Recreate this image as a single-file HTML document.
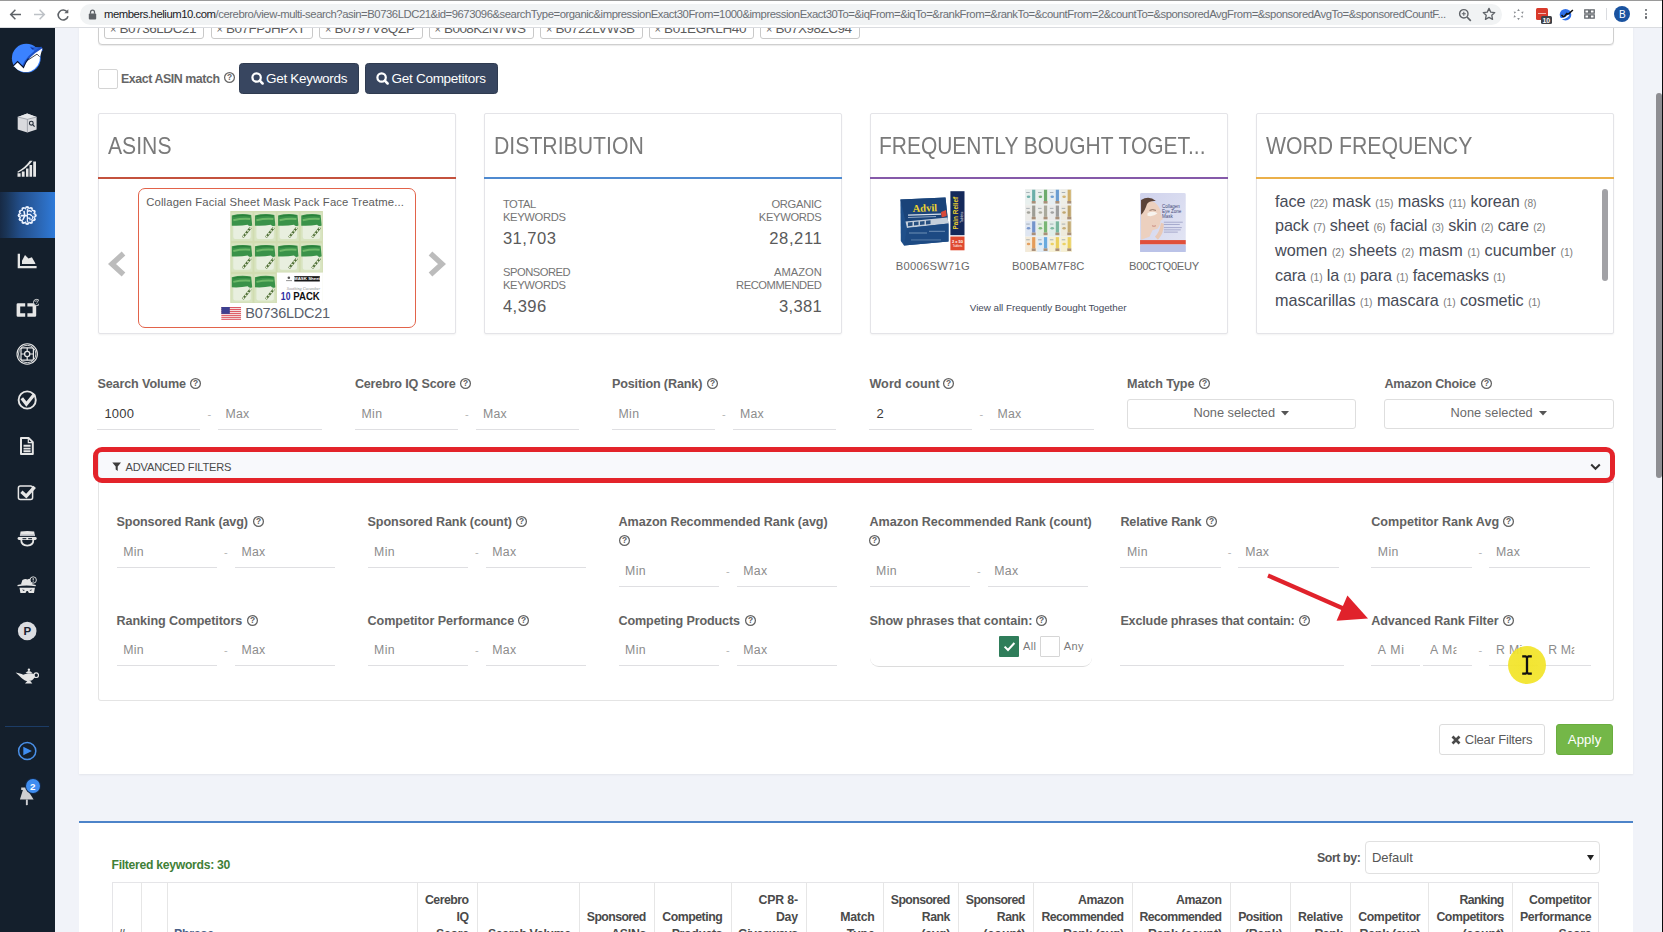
<!DOCTYPE html>
<html lang="en"><head><meta charset="utf-8"><title>Cerebro - Helium 10</title>
<style>
html,body{margin:0;padding:0;}
body{width:1663px;height:932px;overflow:hidden;position:relative;background:#f1f3f9;
font-family:"Liberation Sans",sans-serif;}
#root{position:absolute;left:0;top:0;width:1663px;height:932px;overflow:hidden;}
#root div,#root span.t,#root svg{position:absolute;box-sizing:border-box;}
span.t{white-space:nowrap;display:block;}
</style></head><body><div id="root">
<div style="left:79px;top:20px;width:1553.5px;height:754px;background:#fff;box-shadow:0 1px 2px rgba(0,0,0,.06);"></div>
<div style="left:79px;top:821px;width:1553.5px;height:120px;background:#fff;border-top:2px solid #4d84c9;"></div>
<div style="left:97.5px;top:10px;width:1516.5px;height:34.5px;border:1px solid #cfcfcf;border-radius:4px;background:#fff;box-shadow:0 1px 1px rgba(0,0,0,.08);"></div>
<div style="left:104px;top:14px;width:100px;height:24.5px;border:1px solid #c9c9c9;border-radius:3px;background:#fff;"></div>
<span class="t" style="top:24.09px;font-size:11px;line-height:11px;color:#666;left:110px;">×</span>
<span class="t" style="top:22.27px;font-size:13.5px;line-height:13.5px;color:#5c5c5c;letter-spacing:-0.451px;left:119.5px;">B0736LDC21</span>
<div style="left:210.5px;top:14px;width:102.5px;height:24.5px;border:1px solid #c9c9c9;border-radius:3px;background:#fff;"></div>
<span class="t" style="top:24.09px;font-size:11px;line-height:11px;color:#666;left:216.5px;">×</span>
<span class="t" style="top:22.27px;font-size:13.5px;line-height:13.5px;color:#5c5c5c;letter-spacing:-0.503px;left:226px;">B07FPJHPXT</span>
<div style="left:319px;top:14px;width:103.5px;height:24.5px;border:1px solid #c9c9c9;border-radius:3px;background:#fff;"></div>
<span class="t" style="top:24.09px;font-size:11px;line-height:11px;color:#666;left:325px;">×</span>
<span class="t" style="top:22.27px;font-size:13.5px;line-height:13.5px;color:#5c5c5c;letter-spacing:-0.312px;left:334.5px;">B0797V8QZP</span>
<div style="left:428.5px;top:14px;width:105px;height:24.5px;border:1px solid #c9c9c9;border-radius:3px;background:#fff;"></div>
<span class="t" style="top:24.09px;font-size:11px;line-height:11px;color:#666;left:434.5px;">×</span>
<span class="t" style="top:22.27px;font-size:13.5px;line-height:13.5px;color:#5c5c5c;letter-spacing:-0.561px;left:444px;">B008K2N7WS</span>
<div style="left:540px;top:14px;width:102.5px;height:24.5px;border:1px solid #c9c9c9;border-radius:3px;background:#fff;"></div>
<span class="t" style="top:24.09px;font-size:11px;line-height:11px;color:#666;left:546px;">×</span>
<span class="t" style="top:22.27px;font-size:13.5px;line-height:13.5px;color:#5c5c5c;letter-spacing:-0.479px;left:555.5px;">B0722LVW3B</span>
<div style="left:648.5px;top:14px;width:105.5px;height:24.5px;border:1px solid #c9c9c9;border-radius:3px;background:#fff;"></div>
<span class="t" style="top:24.09px;font-size:11px;line-height:11px;color:#666;left:654.5px;">×</span>
<span class="t" style="top:22.27px;font-size:13.5px;line-height:13.5px;color:#5c5c5c;letter-spacing:-0.340px;left:664px;">B01EGRLH40</span>
<div style="left:760px;top:14px;width:99.5px;height:24.5px;border:1px solid #c9c9c9;border-radius:3px;background:#fff;"></div>
<span class="t" style="top:24.09px;font-size:11px;line-height:11px;color:#666;left:766px;">×</span>
<span class="t" style="top:22.27px;font-size:13.5px;line-height:13.5px;color:#5c5c5c;letter-spacing:-0.507px;left:775.5px;">B07X98ZC94</span>
<div style="left:97.5px;top:69px;width:20px;height:20px;border:1px solid #d4d4d4;border-radius:2px;background:#fff;"></div>
<span class="t" style="top:73.00px;font-size:12.4px;line-height:12.4px;color:#666;font-weight:700;letter-spacing:-0.440px;left:121px;">Exact ASIN match</span>
<svg style="left:222.7px;top:71.1px" width="13" height="13" viewBox="0 0 13 13"><circle cx="6.5" cy="6.5" r="4.9" fill="none" stroke="#666" stroke-width="1.25"/><text x="6.5" y="9.4" font-size="8.4" font-weight="700" text-anchor="middle" fill="#666" font-family="Liberation Sans, sans-serif">?</text></svg>
<div style="left:238.5px;top:63px;width:120.5px;height:31px;background:#384660;border-radius:3.5px;border:1px solid #2f3b50;"></div>
<svg style="left:250.5px;top:72px" width="13" height="13" viewBox="0 0 13 13"><circle cx="5.6" cy="5.5" r="4.2" fill="none" stroke="#fff" stroke-width="2.2"/><path d="M8.8 8.7 L11.6 11.5" stroke="#fff" stroke-width="2.5" stroke-linecap="round"/></svg>
<span class="t" style="top:72.17px;font-size:13.5px;line-height:13.5px;color:#fff;letter-spacing:-0.300px;left:266px;">Get Keywords</span>
<div style="left:364.5px;top:63px;width:133.5px;height:31px;background:#384660;border-radius:3.5px;border:1px solid #2f3b50;"></div>
<svg style="left:376px;top:72px" width="13" height="13" viewBox="0 0 13 13"><circle cx="5.6" cy="5.5" r="4.2" fill="none" stroke="#fff" stroke-width="2.2"/><path d="M8.8 8.7 L11.6 11.5" stroke="#fff" stroke-width="2.5" stroke-linecap="round"/></svg>
<span class="t" style="top:72.17px;font-size:13.5px;line-height:13.5px;color:#fff;letter-spacing:-0.271px;left:391.5px;">Get Competitors</span>
<div style="left:97.5px;top:113px;width:358px;height:220.5px;background:#fff;border:1px solid #e4e4e8;border-radius:2px;box-shadow:0 1px 2px rgba(0,0,0,.05);"></div>
<div style="left:97.5px;top:177.1px;width:358px;height:2.2px;background:#c4523e;"></div>
<span class="t" style="top:134.56px;font-size:23.2px;line-height:23.2px;color:#7a7a7a;left:108px;transform:scaleX(0.9124);transform-origin:0 0;">ASINS</span>
<div style="left:484px;top:113px;width:358px;height:220.5px;background:#fff;border:1px solid #e4e4e8;border-radius:2px;box-shadow:0 1px 2px rgba(0,0,0,.05);"></div>
<div style="left:484px;top:177.1px;width:358px;height:2.2px;background:#4f8ad0;"></div>
<span class="t" style="top:134.56px;font-size:23.2px;line-height:23.2px;color:#7a7a7a;left:493.7px;transform:scaleX(0.9156);transform-origin:0 0;">DISTRIBUTION</span>
<div style="left:870px;top:113px;width:358px;height:220.5px;background:#fff;border:1px solid #e4e4e8;border-radius:2px;box-shadow:0 1px 2px rgba(0,0,0,.05);"></div>
<div style="left:870px;top:177.1px;width:358px;height:2.2px;background:#8559a9;"></div>
<span class="t" style="top:134.56px;font-size:23.2px;line-height:23.2px;color:#7a7a7a;left:879.4px;transform:scaleX(0.9039);transform-origin:0 0;">FREQUENTLY BOUGHT TOGET...</span>
<div style="left:1256.3px;top:113px;width:358px;height:220.5px;background:#fff;border:1px solid #e4e4e8;border-radius:2px;box-shadow:0 1px 2px rgba(0,0,0,.05);"></div>
<div style="left:1256.3px;top:177.1px;width:358px;height:2.2px;background:#ebb04a;"></div>
<span class="t" style="top:134.56px;font-size:23.2px;line-height:23.2px;color:#7a7a7a;left:1266.3px;transform:scaleX(0.9151);transform-origin:0 0;">WORD FREQUENCY</span>
<div style="left:137.6px;top:188.4px;width:278.2px;height:139.8px;border:1.8px solid #e2634a;border-radius:7px;background:#fff;"></div>
<span class="t" style="top:196.63px;font-size:11.3px;line-height:11.3px;color:#5c5c5c;letter-spacing:0.144px;left:146.2px;">Collagen Facial Sheet Mask Pack Face Treatme...</span>
<span class="t" style="top:306.33px;font-size:14.5px;line-height:14.5px;color:#5a5f6c;letter-spacing:-0.231px;left:245.2px;">B0736LDC21</span>
<svg style="left:108px;top:250px" width="20" height="28" viewBox="0 0 20 28"><path d="M15.5 3.5 L4 14 L15.5 24.5" fill="none" stroke="#bcbcbc" stroke-width="5.4"/></svg>
<svg style="left:425.5px;top:250px" width="20" height="28" viewBox="0 0 20 28"><path d="M4.5 3.5 L16 14 L4.5 24.5" fill="none" stroke="#bcbcbc" stroke-width="5.4"/></svg>
<svg style="left:221.3px;top:306.8px" width="20.4" height="12.8" viewBox="0 0 20 13"><rect width="20" height="13" fill="#f6eaea"/><rect y="0.00" width="20" height="1.050" fill="#dd5862"/><rect y="2.00" width="20" height="1.050" fill="#dd5862"/><rect y="4.00" width="20" height="1.050" fill="#dd5862"/><rect y="6.00" width="20" height="1.050" fill="#dd5862"/><rect y="8.00" width="20" height="1.050" fill="#dd5862"/><rect y="10.00" width="20" height="1.050" fill="#dd5862"/><rect y="12.00" width="20" height="1.050" fill="#dd5862"/><rect width="8.600" height="7" fill="#3d4090"/></svg>
<svg style="left:230px;top:210.6px" width="93.2" height="92.6" viewBox="0 0 93 93"><rect width="93" height="93" fill="#d1dcb1"/><rect x="1.00" y="1.50" width="21.300" height="28.500" fill="#d8e4c1"/><rect x="3.00" y="13.00" width="17.500" height="15" rx="2" fill="#e8efdf"/><path d="M1.50 4.50q10-2.500 19.500-.500l1 10.500q-3 1.500-4.500-.800-7 1.500-16 1z" fill="#3a9249"/><path d="M3.00 9.20q9-2 17-1.200" fill="none" stroke="#6db868" stroke-width="2"/><path d="M3.00 5.40q9-1.600 17-.600" fill="none" stroke="#2a803b" stroke-width="1.300"/><path d="M20.50 16.50L12.50 26.50" stroke="#4a6b32" stroke-width="2.300"/><path d="M20.50 16.50L12.50 26.50" stroke="#eef4dc" stroke-width="1.500" stroke-dasharray="1.700 1.900"/><rect x="24.25" y="1.50" width="21.300" height="28.500" fill="#d8e4c1"/><rect x="26.25" y="13.00" width="17.500" height="15" rx="2" fill="#e8efdf"/><path d="M24.75 4.50q10-2.500 19.500-.500l1 10.500q-3 1.500-4.500-.800-7 1.500-16 1z" fill="#3a9249"/><path d="M26.25 9.20q9-2 17-1.200" fill="none" stroke="#6db868" stroke-width="2"/><path d="M26.25 5.40q9-1.600 17-.600" fill="none" stroke="#2a803b" stroke-width="1.300"/><path d="M43.75 16.50L35.75 26.50" stroke="#4a6b32" stroke-width="2.300"/><path d="M43.75 16.50L35.75 26.50" stroke="#eef4dc" stroke-width="1.500" stroke-dasharray="1.700 1.900"/><rect x="47.50" y="1.50" width="21.300" height="28.500" fill="#d8e4c1"/><rect x="49.50" y="13.00" width="17.500" height="15" rx="2" fill="#e8efdf"/><path d="M48.00 4.50q10-2.500 19.500-.500l1 10.500q-3 1.500-4.500-.800-7 1.500-16 1z" fill="#3a9249"/><path d="M49.50 9.20q9-2 17-1.200" fill="none" stroke="#6db868" stroke-width="2"/><path d="M49.50 5.40q9-1.600 17-.600" fill="none" stroke="#2a803b" stroke-width="1.300"/><path d="M67.00 16.50L59.00 26.50" stroke="#4a6b32" stroke-width="2.300"/><path d="M67.00 16.50L59.00 26.50" stroke="#eef4dc" stroke-width="1.500" stroke-dasharray="1.700 1.900"/><rect x="70.75" y="1.50" width="21.300" height="28.500" fill="#d8e4c1"/><rect x="72.75" y="13.00" width="17.500" height="15" rx="2" fill="#e8efdf"/><path d="M71.25 4.50q10-2.500 19.500-.500l1 10.500q-3 1.500-4.500-.800-7 1.500-16 1z" fill="#3a9249"/><path d="M72.75 9.20q9-2 17-1.200" fill="none" stroke="#6db868" stroke-width="2"/><path d="M72.75 5.40q9-1.600 17-.600" fill="none" stroke="#2a803b" stroke-width="1.300"/><path d="M90.25 16.50L82.25 26.50" stroke="#4a6b32" stroke-width="2.300"/><path d="M90.25 16.50L82.25 26.50" stroke="#eef4dc" stroke-width="1.500" stroke-dasharray="1.700 1.900"/><rect x="1.00" y="32.50" width="21.300" height="28.500" fill="#d8e4c1"/><rect x="3.00" y="44.00" width="17.500" height="15" rx="2" fill="#e8efdf"/><path d="M1.50 35.50q10-2.500 19.500-.500l1 10.500q-3 1.500-4.500-.800-7 1.500-16 1z" fill="#3a9249"/><path d="M3.00 40.20q9-2 17-1.200" fill="none" stroke="#6db868" stroke-width="2"/><path d="M3.00 36.40q9-1.600 17-.600" fill="none" stroke="#2a803b" stroke-width="1.300"/><path d="M20.50 47.50L12.50 57.50" stroke="#4a6b32" stroke-width="2.300"/><path d="M20.50 47.50L12.50 57.50" stroke="#eef4dc" stroke-width="1.500" stroke-dasharray="1.700 1.900"/><rect x="24.25" y="32.50" width="21.300" height="28.500" fill="#d8e4c1"/><rect x="26.25" y="44.00" width="17.500" height="15" rx="2" fill="#e8efdf"/><path d="M24.75 35.50q10-2.500 19.500-.500l1 10.500q-3 1.500-4.500-.800-7 1.500-16 1z" fill="#3a9249"/><path d="M26.25 40.20q9-2 17-1.200" fill="none" stroke="#6db868" stroke-width="2"/><path d="M26.25 36.40q9-1.600 17-.600" fill="none" stroke="#2a803b" stroke-width="1.300"/><path d="M43.75 47.50L35.75 57.50" stroke="#4a6b32" stroke-width="2.300"/><path d="M43.75 47.50L35.75 57.50" stroke="#eef4dc" stroke-width="1.500" stroke-dasharray="1.700 1.900"/><rect x="47.50" y="32.50" width="21.300" height="28.500" fill="#d8e4c1"/><rect x="49.50" y="44.00" width="17.500" height="15" rx="2" fill="#e8efdf"/><path d="M48.00 35.50q10-2.500 19.500-.500l1 10.500q-3 1.500-4.500-.800-7 1.500-16 1z" fill="#3a9249"/><path d="M49.50 40.20q9-2 17-1.200" fill="none" stroke="#6db868" stroke-width="2"/><path d="M49.50 36.40q9-1.600 17-.600" fill="none" stroke="#2a803b" stroke-width="1.300"/><path d="M67.00 47.50L59.00 57.50" stroke="#4a6b32" stroke-width="2.300"/><path d="M67.00 47.50L59.00 57.50" stroke="#eef4dc" stroke-width="1.500" stroke-dasharray="1.700 1.900"/><rect x="70.75" y="32.50" width="21.300" height="28.500" fill="#d8e4c1"/><rect x="72.75" y="44.00" width="17.500" height="15" rx="2" fill="#e8efdf"/><path d="M71.25 35.50q10-2.500 19.500-.500l1 10.500q-3 1.500-4.500-.800-7 1.500-16 1z" fill="#3a9249"/><path d="M72.75 40.20q9-2 17-1.200" fill="none" stroke="#6db868" stroke-width="2"/><path d="M72.75 36.40q9-1.600 17-.600" fill="none" stroke="#2a803b" stroke-width="1.300"/><path d="M90.25 47.50L82.25 57.50" stroke="#4a6b32" stroke-width="2.300"/><path d="M90.25 47.50L82.25 57.50" stroke="#eef4dc" stroke-width="1.500" stroke-dasharray="1.700 1.900"/><rect x="1.00" y="63.50" width="21.300" height="28.500" fill="#d8e4c1"/><rect x="3.00" y="75.00" width="17.500" height="15" rx="2" fill="#e8efdf"/><path d="M1.50 66.50q10-2.500 19.500-.500l1 10.500q-3 1.500-4.500-.800-7 1.500-16 1z" fill="#3a9249"/><path d="M3.00 71.20q9-2 17-1.200" fill="none" stroke="#6db868" stroke-width="2"/><path d="M3.00 67.40q9-1.600 17-.600" fill="none" stroke="#2a803b" stroke-width="1.300"/><path d="M20.50 78.50L12.50 88.50" stroke="#4a6b32" stroke-width="2.300"/><path d="M20.50 78.50L12.50 88.50" stroke="#eef4dc" stroke-width="1.500" stroke-dasharray="1.700 1.900"/><rect x="24.25" y="63.50" width="21.300" height="28.500" fill="#d8e4c1"/><rect x="26.25" y="75.00" width="17.500" height="15" rx="2" fill="#e8efdf"/><path d="M24.75 66.50q10-2.500 19.500-.500l1 10.500q-3 1.500-4.500-.800-7 1.500-16 1z" fill="#3a9249"/><path d="M26.25 71.20q9-2 17-1.200" fill="none" stroke="#6db868" stroke-width="2"/><path d="M26.25 67.40q9-1.600 17-.600" fill="none" stroke="#2a803b" stroke-width="1.300"/><path d="M43.75 78.50L35.75 88.50" stroke="#4a6b32" stroke-width="2.300"/><path d="M43.75 78.50L35.75 88.50" stroke="#eef4dc" stroke-width="1.500" stroke-dasharray="1.700 1.900"/><rect x="46.800" y="61.800" width="46.200" height="31.200" fill="#fff"/><rect x="64.300" y="65.400" width="25.600" height="5.400" fill="#1a1a1a"/><circle cx="58.800" cy="67" r="1.300" fill="#555"/><rect x="56" y="69.600" width="6" height=".800" fill="#777"/><text x="77.100" y="69.800" font-size="4.400" font-weight="700" fill="#fff" text-anchor="middle" font-family="Liberation Sans, sans-serif">MASK Sheet</text><text x="73.500" y="79.400" font-size="4.200" font-style="italic" fill="#8a8a8a" text-anchor="middle" font-family="Liberation Serif, serif">Soothing Cucumber</text><text x="50.800" y="89.800" font-size="10.800" font-weight="700" fill="#2b2ba2" font-family="Liberation Sans, sans-serif" textLength="9.600" lengthAdjust="spacingAndGlyphs">10</text><text x="63.300" y="89.800" font-size="10.800" font-weight="700" fill="#111" font-family="Liberation Sans, sans-serif" textLength="26.600" lengthAdjust="spacingAndGlyphs">PACK</text></svg>
<span class="t" style="top:198.92px;font-size:11.2px;line-height:11.2px;color:#747474;letter-spacing:-0.408px;left:502.9px;">TOTAL</span>
<span class="t" style="top:212.42px;font-size:11.2px;line-height:11.2px;color:#747474;letter-spacing:-0.326px;left:502.9px;">KEYWORDS</span>
<span class="t" style="top:230.55px;font-size:16.6px;line-height:16.6px;color:#5a5a5a;letter-spacing:0.447px;left:502.9px;">31,703</span>
<span class="t" style="top:266.62px;font-size:11.2px;line-height:11.2px;color:#747474;letter-spacing:-0.463px;left:502.9px;">SPONSORED</span>
<span class="t" style="top:280.02px;font-size:11.2px;line-height:11.2px;color:#747474;letter-spacing:-0.326px;left:502.9px;">KEYWORDS</span>
<span class="t" style="top:298.75px;font-size:16.6px;line-height:16.6px;color:#5a5a5a;letter-spacing:0.467px;left:502.9px;">4,396</span>
<span class="t" style="top:198.92px;font-size:11.2px;line-height:11.2px;color:#747474;letter-spacing:-0.303px;right:841.50px;">ORGANIC</span>
<span class="t" style="top:212.42px;font-size:11.2px;line-height:11.2px;color:#747474;letter-spacing:-0.326px;right:841.53px;">KEYWORDS</span>
<span class="t" style="top:230.55px;font-size:16.6px;line-height:16.6px;color:#5a5a5a;letter-spacing:0.614px;right:840.59px;">28,211</span>
<span class="t" style="top:266.62px;font-size:11.2px;line-height:11.2px;color:#747474;letter-spacing:-0.012px;right:841.21px;">AMAZON</span>
<span class="t" style="top:280.02px;font-size:11.2px;line-height:11.2px;color:#747474;letter-spacing:-0.433px;right:841.63px;">RECOMMENDED</span>
<span class="t" style="top:298.75px;font-size:16.6px;line-height:16.6px;color:#5a5a5a;letter-spacing:0.317px;right:840.88px;">3,381</span>
<span class="t" style="top:260.62px;font-size:11.2px;line-height:11.2px;color:#6a6a6a;letter-spacing:0.285px;left:895.7px;">B0006SW71G</span>
<span class="t" style="top:260.62px;font-size:11.2px;line-height:11.2px;color:#6a6a6a;letter-spacing:0.098px;left:1012px;">B00BAM7F8C</span>
<span class="t" style="top:260.62px;font-size:11.2px;line-height:11.2px;color:#6a6a6a;letter-spacing:-0.272px;left:1129px;">B00CTQ0EUY</span>
<span class="t" style="top:302.82px;font-size:9.9px;line-height:9.9px;color:#444a5a;letter-spacing:-0.047px;left:969.8px;">View all Frequently Bought Together</span>
<svg style="left:899px;top:190px" width="67" height="62" viewBox="0 0 67 62"><path d="M1.400 9.600L46.500 7.600 49.500 35 49.500 51.500 5 55.500 1.800 51z" fill="#1f4f8a"/><path d="M1.400 9.600L46.500 7.600 48.500 27.500 6.500 31.500z" fill="#1a4379"/><path d="M6.500 31.500L48.500 27.500 49.500 33.500 8 38z" fill="#c4cedb"/><path d="M9 32.600l4.500-.500v3.600L9 36.200zM15 32l4.500-.500v3.600L15 35.600zM21 31.400l4.500-.500v3.600L21 35zM27 30.800l4.500-.500v3.600l-4.500.500z" fill="#274f80"/><path d="M8 38l41.500-4.500V51.500L5 55.500z" fill="#1d4a83"/><rect x="10" y="42.500" width="18" height="1" fill="#6f8fb6"/><rect x="30" y="40.800" width="16" height="1" fill="#6f8fb6"/><rect x="12" y="49.500" width="30" height=".900" fill="#5f82ad"/><text x="26" y="21.500" font-size="10.500" font-weight="700" fill="#efd42f" text-anchor="middle" font-family="Liberation Serif, serif" transform="rotate(-2 26 20)">Advil</text><rect x="9" y="24" width="33" height="1.200" fill="#d9e1ec" transform="rotate(-2 26 24)"/><rect x="9" y="26.500" width="28" height="1" fill="#8fa6c4" transform="rotate(-2 26 26)"/><path d="M42 22l5-2 .700 6-5 1.500z" fill="#d9493a"/><rect x="51.400" y="1.200" width="14.100" height="44" fill="#14295a"/><rect x="51.400" y="46.500" width="14.100" height="13.800" fill="#e0492f"/><text transform="translate(59,39.500) rotate(-90)" font-size="6.400" font-weight="700" fill="#efd42f" font-family="Liberation Sans, sans-serif">Pain Relief</text><text transform="translate(63.500,33) rotate(-90)" font-size="3.600" fill="#e8e8f0" font-family="Liberation Sans, sans-serif">Tablets</text><text x="58.500" y="52.600" font-size="4" font-weight="700" fill="#fff" text-anchor="middle" font-family="Liberation Sans, sans-serif">2 x 50</text><text x="58.500" y="56.800" font-size="3" fill="#fff" text-anchor="middle" font-family="Liberation Sans, sans-serif">Tablets</text></svg>
<svg style="left:1024.8px;top:188.700px" width="47.400" height="63.500" viewBox="0 0 48 64"><rect width="48" height="64" fill="#eef0ef"/><rect x="0.4" y="0.4" width="11.200" height="15.200" fill="#e8f0ee"/><rect x="7.2" y="0.6" width="3.200" height="11.400" fill="#4a9e96" opacity=".8"/><rect x="6.8" y="12" width="4" height="2.600" fill="#a98f78"/><ellipse cx="3.6" cy="7.6" rx="1.800" ry="1.300" fill="#4a9e96" opacity=".75"/><rect x="1.2" y="3" width="3.600" height=".700" fill="#8b97a0"/><rect x="12.4" y="0.4" width="11.200" height="15.200" fill="#e8f0ec"/><rect x="19.2" y="0.6" width="3.200" height="11.400" fill="#4f9a4f" opacity=".8"/><rect x="18.8" y="12" width="4" height="2.600" fill="#a98f78"/><ellipse cx="15.6" cy="7.6" rx="1.800" ry="1.300" fill="#4f9a4f" opacity=".75"/><rect x="13.2" y="3" width="3.600" height=".700" fill="#8b97a0"/><rect x="24.4" y="0.4" width="11.200" height="15.200" fill="#e6eef2"/><rect x="31.2" y="0.6" width="3.200" height="11.400" fill="#4a88c8" opacity=".8"/><rect x="30.8" y="12" width="4" height="2.600" fill="#a98f78"/><ellipse cx="27.6" cy="7.6" rx="1.800" ry="1.300" fill="#4a88c8" opacity=".75"/><rect x="25.2" y="3" width="3.600" height=".700" fill="#8b97a0"/><rect x="36.4" y="0.4" width="11.200" height="15.200" fill="#eeeee6"/><rect x="43.2" y="0.6" width="3.200" height="11.400" fill="#c8a04a" opacity=".8"/><rect x="42.8" y="12" width="4" height="2.600" fill="#a98f78"/><ellipse cx="39.6" cy="7.6" rx="1.800" ry="1.300" fill="#c8a04a" opacity=".75"/><rect x="37.2" y="3" width="3.600" height=".700" fill="#8b97a0"/><rect x="0.4" y="16.4" width="11.200" height="15.200" fill="#ecebe8"/><rect x="7.2" y="16.6" width="3.200" height="11.400" fill="#8a8a80" opacity=".8"/><rect x="6.8" y="28" width="4" height="2.600" fill="#a98f78"/><ellipse cx="3.6" cy="23.6" rx="1.800" ry="1.300" fill="#8a8a80" opacity=".75"/><rect x="1.2" y="19" width="3.600" height=".700" fill="#8b97a0"/><rect x="12.4" y="16.4" width="11.200" height="15.200" fill="#ecece8"/><rect x="19.2" y="16.6" width="3.200" height="11.400" fill="#9a9a8a" opacity=".8"/><rect x="18.8" y="28" width="4" height="2.600" fill="#a98f78"/><ellipse cx="15.6" cy="23.6" rx="1.800" ry="1.300" fill="#9a9a8a" opacity=".75"/><rect x="13.2" y="19" width="3.600" height=".700" fill="#8b97a0"/><rect x="24.4" y="16.4" width="11.200" height="15.200" fill="#eaeaea"/><rect x="31.2" y="16.6" width="3.200" height="11.400" fill="#8a8a8a" opacity=".8"/><rect x="30.8" y="28" width="4" height="2.600" fill="#a98f78"/><ellipse cx="27.6" cy="23.6" rx="1.800" ry="1.300" fill="#8a8a8a" opacity=".75"/><rect x="25.2" y="19" width="3.600" height=".700" fill="#8b97a0"/><rect x="36.4" y="16.4" width="11.200" height="15.200" fill="#eeeadf"/><rect x="43.2" y="16.6" width="3.200" height="11.400" fill="#b0904a" opacity=".8"/><rect x="42.8" y="28" width="4" height="2.600" fill="#a98f78"/><ellipse cx="39.6" cy="23.6" rx="1.800" ry="1.300" fill="#b0904a" opacity=".75"/><rect x="37.2" y="19" width="3.600" height=".700" fill="#8b97a0"/><rect x="0.4" y="32.4" width="11.200" height="15.200" fill="#dfe6f2"/><rect x="7.2" y="32.6" width="3.200" height="11.400" fill="#5a7fc0" opacity=".8"/><rect x="6.8" y="44" width="4" height="2.600" fill="#a98f78"/><ellipse cx="3.6" cy="39.6" rx="1.800" ry="1.300" fill="#5a7fc0" opacity=".75"/><rect x="1.2" y="35" width="3.600" height=".700" fill="#8b97a0"/><rect x="12.4" y="32.4" width="11.200" height="15.200" fill="#e4eee0"/><rect x="19.2" y="32.6" width="3.200" height="11.400" fill="#5fa85a" opacity=".8"/><rect x="18.8" y="44" width="4" height="2.600" fill="#a98f78"/><ellipse cx="15.6" cy="39.6" rx="1.800" ry="1.300" fill="#5fa85a" opacity=".75"/><rect x="13.2" y="35" width="3.600" height=".700" fill="#8b97a0"/><rect x="24.4" y="32.4" width="11.200" height="15.200" fill="#e0eee8"/><rect x="31.2" y="32.6" width="3.200" height="11.400" fill="#5fa88a" opacity=".8"/><rect x="30.8" y="44" width="4" height="2.600" fill="#a98f78"/><ellipse cx="27.6" cy="39.6" rx="1.800" ry="1.300" fill="#5fa88a" opacity=".75"/><rect x="25.2" y="35" width="3.600" height=".700" fill="#8b97a0"/><rect x="36.4" y="32.4" width="11.200" height="15.200" fill="#eeeadc"/><rect x="43.2" y="32.6" width="3.200" height="11.400" fill="#b89a5a" opacity=".8"/><rect x="42.8" y="44" width="4" height="2.600" fill="#a98f78"/><ellipse cx="39.6" cy="39.6" rx="1.800" ry="1.300" fill="#b89a5a" opacity=".75"/><rect x="37.2" y="35" width="3.600" height=".700" fill="#8b97a0"/><rect x="0.4" y="48.4" width="11.200" height="15.200" fill="#f4ead8"/><rect x="7.2" y="48.6" width="3.200" height="11.400" fill="#e0883a" opacity=".8"/><rect x="6.8" y="60" width="4" height="2.600" fill="#a98f78"/><ellipse cx="3.6" cy="55.6" rx="1.800" ry="1.300" fill="#e0883a" opacity=".75"/><rect x="1.2" y="51" width="3.600" height=".700" fill="#8b97a0"/><rect x="12.4" y="48.4" width="11.200" height="15.200" fill="#e0ecf6"/><rect x="19.2" y="48.6" width="3.200" height="11.400" fill="#4a9ad8" opacity=".8"/><rect x="18.8" y="60" width="4" height="2.600" fill="#a98f78"/><ellipse cx="15.6" cy="55.6" rx="1.800" ry="1.300" fill="#4a9ad8" opacity=".75"/><rect x="13.2" y="51" width="3.600" height=".700" fill="#8b97a0"/><rect x="24.4" y="48.4" width="11.200" height="15.200" fill="#f6f0d4"/><rect x="31.2" y="48.6" width="3.200" height="11.400" fill="#e8c840" opacity=".8"/><rect x="30.8" y="60" width="4" height="2.600" fill="#a98f78"/><ellipse cx="27.6" cy="55.6" rx="1.800" ry="1.300" fill="#e8c840" opacity=".75"/><rect x="25.2" y="51" width="3.600" height=".700" fill="#8b97a0"/><rect x="36.4" y="48.4" width="11.200" height="15.200" fill="#f6f0d4"/><rect x="43.2" y="48.6" width="3.200" height="11.400" fill="#e8c840" opacity=".8"/><rect x="42.8" y="60" width="4" height="2.600" fill="#a98f78"/><ellipse cx="39.6" cy="55.6" rx="1.800" ry="1.300" fill="#e8c840" opacity=".75"/><rect x="37.2" y="51" width="3.600" height=".700" fill="#8b97a0"/></svg>
<svg style="left:1140px;top:192.600px" width="45.800" height="59.600" viewBox="0 0 46 60"><defs><linearGradient id="gcol" x1="0" y1="0" x2="1" y2="1"><stop offset="0" stop-color="#cfd2ec"/><stop offset="1" stop-color="#e4e6f4"/></linearGradient></defs><rect width="46" height="60" rx="1.500" fill="url(#gcol)"/><path d="M1 9.500q7-4 14 0 6 5 6 12l2 5-2.500 1.500q0 5-3 8l-5 1.500-3 6.500-8.500 3z" fill="#ecd0bf"/><path d="M1 7q8-5 15 1-7-.500-9 3-2 7-6 11z" fill="#5a4238"/><path d="M7.500 20.500q5-3 10 0-4 4-10 2.500z" fill="#f7f3ee"/><path d="M9.500 17.500q3-1.500 6.500 0" stroke="#6a4a3c" stroke-width=".700" fill="none"/><path d="M12 33q2 1 4 0" stroke="#c98a80" stroke-width="1" fill="none"/><path d="M15 44q5-5 6-14l3 1q0 10-6 16z" fill="#e9c9b6"/><text x="22" y="14.600" font-size="4.600" fill="#454b78" font-family="Liberation Sans, sans-serif">Collagen</text><text x="22" y="20" font-size="4.600" fill="#454b78" font-family="Liberation Sans, sans-serif">Eye Zone</text><text x="22" y="25.400" font-size="4.600" fill="#454b78" font-family="Liberation Sans, sans-serif">Mask</text><rect x="24" y="29" width="19" height=".700" fill="#8f93bd"/><rect x="24" y="31.200" width="16" height=".700" fill="#8f93bd"/><rect x="24" y="34.600" width="18" height=".700" fill="#8f93bd"/><rect x="24" y="36.800" width="17" height=".700" fill="#8f93bd"/><rect x="24" y="39" width="14" height=".700" fill="#8f93bd"/><rect x="0" y="47.400" width="46" height="4.400" fill="#e04f3b"/><rect x="0" y="51.800" width="46" height="8.200" rx="1.500" fill="#bbc3e8"/></svg>
<span class="t" style="top:192.79px;font-size:16.2px;line-height:16.2px;color:#474b57;letter-spacing:-0.041px;left:1275px;">face <span style="font-size:10.2px;color:#7b7b7b">(22)</span> mask <span style="font-size:10.2px;color:#7b7b7b">(15)</span> masks <span style="font-size:10.2px;color:#7b7b7b">(11)</span> korean <span style="font-size:10.2px;color:#7b7b7b">(8)</span></span>
<span class="t" style="top:217.39px;font-size:16.2px;line-height:16.2px;color:#474b57;letter-spacing:-0.091px;left:1275px;">pack <span style="font-size:10.2px;color:#7b7b7b">(7)</span> sheet <span style="font-size:10.2px;color:#7b7b7b">(6)</span> facial <span style="font-size:10.2px;color:#7b7b7b">(3)</span> skin <span style="font-size:10.2px;color:#7b7b7b">(2)</span> care <span style="font-size:10.2px;color:#7b7b7b">(2)</span></span>
<span class="t" style="top:242.09px;font-size:16.2px;line-height:16.2px;color:#474b57;letter-spacing:0.040px;left:1275px;">women <span style="font-size:10.2px;color:#7b7b7b">(2)</span> sheets <span style="font-size:10.2px;color:#7b7b7b">(2)</span> masm <span style="font-size:10.2px;color:#7b7b7b">(1)</span> cucumber <span style="font-size:10.2px;color:#7b7b7b">(1)</span></span>
<span class="t" style="top:266.89px;font-size:16.2px;line-height:16.2px;color:#474b57;letter-spacing:-0.127px;left:1275px;">cara <span style="font-size:10.2px;color:#7b7b7b">(1)</span> la <span style="font-size:10.2px;color:#7b7b7b">(1)</span> para <span style="font-size:10.2px;color:#7b7b7b">(1)</span> facemasks <span style="font-size:10.2px;color:#7b7b7b">(1)</span></span>
<span class="t" style="top:291.69px;font-size:16.2px;line-height:16.2px;color:#474b57;letter-spacing:-0.032px;left:1275px;">mascarillas <span style="font-size:10.2px;color:#7b7b7b">(1)</span> mascara <span style="font-size:10.2px;color:#7b7b7b">(1)</span> cosmetic <span style="font-size:10.2px;color:#7b7b7b">(1)</span></span>
<div style="left:1602px;top:188.8px;width:6px;height:92.2px;background:#a2a2a6;border-radius:3px;"></div>
<span class="t" style="top:378.03px;font-size:12.6px;line-height:12.6px;color:#626262;font-weight:700;letter-spacing:-0.122px;left:97.4px;">Search Volume</span>
<svg style="left:188.9px;top:376.9px" width="13" height="13" viewBox="0 0 13 13"><circle cx="6.5" cy="6.5" r="4.9" fill="none" stroke="#626262" stroke-width="1.25"/><text x="6.5" y="9.4" font-size="8.4" font-weight="700" text-anchor="middle" fill="#626262" font-family="Liberation Sans, sans-serif">?</text></svg>
<span class="t" style="top:378.03px;font-size:12.6px;line-height:12.6px;color:#626262;font-weight:700;letter-spacing:-0.186px;left:354.9px;">Cerebro IQ Score</span>
<svg style="left:459.1px;top:376.9px" width="13" height="13" viewBox="0 0 13 13"><circle cx="6.5" cy="6.5" r="4.9" fill="none" stroke="#626262" stroke-width="1.25"/><text x="6.5" y="9.4" font-size="8.4" font-weight="700" text-anchor="middle" fill="#626262" font-family="Liberation Sans, sans-serif">?</text></svg>
<span class="t" style="top:378.03px;font-size:12.6px;line-height:12.6px;color:#626262;font-weight:700;letter-spacing:-0.133px;left:611.9px;">Position (Rank)</span>
<svg style="left:705.8px;top:376.9px" width="13" height="13" viewBox="0 0 13 13"><circle cx="6.5" cy="6.5" r="4.9" fill="none" stroke="#626262" stroke-width="1.25"/><text x="6.5" y="9.4" font-size="8.4" font-weight="700" text-anchor="middle" fill="#626262" font-family="Liberation Sans, sans-serif">?</text></svg>
<span class="t" style="top:378.03px;font-size:12.6px;line-height:12.6px;color:#626262;font-weight:700;letter-spacing:0.074px;left:869.4px;">Word count</span>
<svg style="left:942.3px;top:376.9px" width="13" height="13" viewBox="0 0 13 13"><circle cx="6.5" cy="6.5" r="4.9" fill="none" stroke="#626262" stroke-width="1.25"/><text x="6.5" y="9.4" font-size="8.4" font-weight="700" text-anchor="middle" fill="#626262" font-family="Liberation Sans, sans-serif">?</text></svg>
<span class="t" style="top:378.03px;font-size:12.6px;line-height:12.6px;color:#626262;font-weight:700;letter-spacing:-0.105px;left:1127px;">Match Type</span>
<svg style="left:1197.9px;top:376.9px" width="13" height="13" viewBox="0 0 13 13"><circle cx="6.5" cy="6.5" r="4.9" fill="none" stroke="#626262" stroke-width="1.25"/><text x="6.5" y="9.4" font-size="8.4" font-weight="700" text-anchor="middle" fill="#626262" font-family="Liberation Sans, sans-serif">?</text></svg>
<span class="t" style="top:378.03px;font-size:12.6px;line-height:12.6px;color:#626262;font-weight:700;letter-spacing:-0.239px;left:1384.4px;">Amazon Choice</span>
<svg style="left:1480.1px;top:376.9px" width="13" height="13" viewBox="0 0 13 13"><circle cx="6.5" cy="6.5" r="4.9" fill="none" stroke="#626262" stroke-width="1.25"/><text x="6.5" y="9.4" font-size="8.4" font-weight="700" text-anchor="middle" fill="#626262" font-family="Liberation Sans, sans-serif">?</text></svg>
<div style="left:97.4px;top:428.5px;width:103px;height:1.1px;background:#dfdfe2;"></div>
<div style="left:218.4px;top:428.5px;width:103.2px;height:1.1px;background:#dfdfe2;"></div>
<span class="t" style="top:409.49px;font-size:11px;line-height:11px;color:#b5b5b5;left:207.4px;">-</span>
<span class="t" style="top:406.90px;font-size:13px;line-height:13px;color:#3a3a3a;letter-spacing:0.226px;left:104.4px;">1000</span>
<span class="t" style="top:408.39px;font-size:12.3px;line-height:12.3px;color:#8c8c8c;letter-spacing:0.283px;left:225.4px;">Max</span>
<div style="left:354.9px;top:428.5px;width:103px;height:1.1px;background:#dfdfe2;"></div>
<div style="left:475.9px;top:428.5px;width:103.2px;height:1.1px;background:#dfdfe2;"></div>
<span class="t" style="top:409.49px;font-size:11px;line-height:11px;color:#b5b5b5;left:464.9px;">-</span>
<span class="t" style="top:408.39px;font-size:12.3px;line-height:12.3px;color:#8c8c8c;letter-spacing:0.336px;left:361.5px;">Min</span>
<span class="t" style="top:408.39px;font-size:12.3px;line-height:12.3px;color:#8c8c8c;letter-spacing:0.283px;left:482.9px;">Max</span>
<div style="left:611.9px;top:428.5px;width:103px;height:1.1px;background:#dfdfe2;"></div>
<div style="left:732.9px;top:428.5px;width:103.2px;height:1.1px;background:#dfdfe2;"></div>
<span class="t" style="top:409.49px;font-size:11px;line-height:11px;color:#b5b5b5;left:721.9px;">-</span>
<span class="t" style="top:408.39px;font-size:12.3px;line-height:12.3px;color:#8c8c8c;letter-spacing:0.336px;left:618.5px;">Min</span>
<span class="t" style="top:408.39px;font-size:12.3px;line-height:12.3px;color:#8c8c8c;letter-spacing:0.283px;left:739.9px;">Max</span>
<div style="left:869.4px;top:428.5px;width:103px;height:1.1px;background:#dfdfe2;"></div>
<div style="left:990.4px;top:428.5px;width:103.2px;height:1.1px;background:#dfdfe2;"></div>
<span class="t" style="top:409.49px;font-size:11px;line-height:11px;color:#b5b5b5;left:979.4px;">-</span>
<span class="t" style="top:406.90px;font-size:13px;line-height:13px;color:#3a3a3a;left:876.4px;">2</span>
<span class="t" style="top:408.39px;font-size:12.3px;line-height:12.3px;color:#8c8c8c;letter-spacing:0.283px;left:997.4px;">Max</span>
<div style="left:1127px;top:398.5px;width:229.4px;height:30.7px;border:1px solid #dedede;border-radius:3px;background:#fff;"></div>
<span class="t" style="top:407.16px;font-size:12.8px;line-height:12.8px;color:#6a6a6a;letter-spacing:-0.026px;left:1193.5px;">None selected</span>
<svg style="left:1281.3px;top:410.5px" width="8" height="5" viewBox="0 0 8 5"><path d="M0 0h8L4 4.4z" fill="#555"/></svg>
<div style="left:1384.4px;top:398.5px;width:229.5px;height:30.7px;border:1px solid #dedede;border-radius:3px;background:#fff;"></div>
<span class="t" style="top:407.16px;font-size:12.8px;line-height:12.8px;color:#6a6a6a;letter-spacing:0.032px;left:1450.5px;">None selected</span>
<svg style="left:1538.8px;top:410.5px" width="8" height="5" viewBox="0 0 8 5"><path d="M0 0h8L4 4.4z" fill="#555"/></svg>
<div style="left:97.5px;top:449.5px;width:1516px;height:33.5px;background:#f8f9fc;border:1px solid #e2e4ea;"></div>
<div style="left:92.9px;top:446.6px;width:1521.7px;height:36.8px;border:5.2px solid #e3232a;border-radius:9px;"></div>
<svg style="left:111.8px;top:462.3px" width="9.4" height="9.6" viewBox="0 0 10 10"><path d="M0.3 0.4h9.4L6.1 4.6v4.9L3.9 8V4.6z" fill="#3d3d3d"/></svg>
<span class="t" style="top:461.90px;font-size:11.1px;line-height:11.1px;color:#4a4a4a;letter-spacing:-0.180px;left:125.5px;">ADVANCED FILTERS</span>
<svg style="left:1589.5px;top:463px" width="11" height="8" viewBox="0 0 11 8"><path d="M1.2 1.5L5.5 5.8L9.8 1.5" fill="none" stroke="#333" stroke-width="2"/></svg>
<div style="left:97.5px;top:483px;width:1516px;height:217.5px;background:#fff;border:1px solid #e4e4e4;border-top:none;border-radius:0 0 3px 3px;"></div>
<span class="t" style="top:515.83px;font-size:12.6px;line-height:12.6px;color:#626262;font-weight:700;letter-spacing:-0.119px;left:116.6px;">Sponsored Rank (avg)</span>
<svg style="left:251.7px;top:514.7px" width="13" height="13" viewBox="0 0 13 13"><circle cx="6.5" cy="6.5" r="4.9" fill="none" stroke="#626262" stroke-width="1.25"/><text x="6.5" y="9.4" font-size="8.4" font-weight="700" text-anchor="middle" fill="#626262" font-family="Liberation Sans, sans-serif">?</text></svg>
<span class="t" style="top:515.83px;font-size:12.6px;line-height:12.6px;color:#626262;font-weight:700;letter-spacing:-0.083px;left:367.5px;">Sponsored Rank (count)</span>
<svg style="left:515.3px;top:514.7px" width="13" height="13" viewBox="0 0 13 13"><circle cx="6.5" cy="6.5" r="4.9" fill="none" stroke="#626262" stroke-width="1.25"/><text x="6.5" y="9.4" font-size="8.4" font-weight="700" text-anchor="middle" fill="#626262" font-family="Liberation Sans, sans-serif">?</text></svg>
<span class="t" style="top:515.83px;font-size:12.6px;line-height:12.6px;color:#626262;font-weight:700;letter-spacing:-0.051px;left:618.5px;">Amazon Recommended Rank (avg)</span>
<svg style="left:617.5px;top:533.7px" width="13" height="13" viewBox="0 0 13 13"><circle cx="6.5" cy="6.5" r="4.9" fill="none" stroke="#626262" stroke-width="1.25"/><text x="6.5" y="9.4" font-size="8.4" font-weight="700" text-anchor="middle" fill="#626262" font-family="Liberation Sans, sans-serif">?</text></svg>
<span class="t" style="top:515.83px;font-size:12.6px;line-height:12.6px;color:#626262;font-weight:700;letter-spacing:-0.031px;left:869.5px;">Amazon Recommended Rank (count)</span>
<svg style="left:868.4px;top:533.7px" width="13" height="13" viewBox="0 0 13 13"><circle cx="6.5" cy="6.5" r="4.9" fill="none" stroke="#626262" stroke-width="1.25"/><text x="6.5" y="9.4" font-size="8.4" font-weight="700" text-anchor="middle" fill="#626262" font-family="Liberation Sans, sans-serif">?</text></svg>
<span class="t" style="top:515.83px;font-size:12.6px;line-height:12.6px;color:#626262;font-weight:700;letter-spacing:-0.117px;left:1120.4px;">Relative Rank</span>
<svg style="left:1204.5px;top:514.7px" width="13" height="13" viewBox="0 0 13 13"><circle cx="6.5" cy="6.5" r="4.9" fill="none" stroke="#626262" stroke-width="1.25"/><text x="6.5" y="9.4" font-size="8.4" font-weight="700" text-anchor="middle" fill="#626262" font-family="Liberation Sans, sans-serif">?</text></svg>
<span class="t" style="top:515.83px;font-size:12.6px;line-height:12.6px;color:#626262;font-weight:700;letter-spacing:0.010px;left:1371.2px;">Competitor Rank Avg</span>
<svg style="left:1501.9px;top:514.7px" width="13" height="13" viewBox="0 0 13 13"><circle cx="6.5" cy="6.5" r="4.9" fill="none" stroke="#626262" stroke-width="1.25"/><text x="6.5" y="9.4" font-size="8.4" font-weight="700" text-anchor="middle" fill="#626262" font-family="Liberation Sans, sans-serif">?</text></svg>
<div style="left:116.6px;top:566.5px;width:100.4px;height:1.1px;background:#dfdfe2;"></div>
<div style="left:234.6px;top:566.5px;width:100.4px;height:1.1px;background:#dfdfe2;"></div>
<span class="t" style="top:547.39px;font-size:11px;line-height:11px;color:#b5b5b5;left:224px;">-</span>
<span class="t" style="top:546.29px;font-size:12.3px;line-height:12.3px;color:#8c8c8c;letter-spacing:0.336px;left:123.2px;">Min</span>
<span class="t" style="top:546.29px;font-size:12.3px;line-height:12.3px;color:#8c8c8c;letter-spacing:0.283px;left:241.4px;">Max</span>
<div style="left:367.5px;top:566.5px;width:100.4px;height:1.1px;background:#dfdfe2;"></div>
<div style="left:485.5px;top:566.5px;width:100.4px;height:1.1px;background:#dfdfe2;"></div>
<span class="t" style="top:547.39px;font-size:11px;line-height:11px;color:#b5b5b5;left:474.9px;">-</span>
<span class="t" style="top:546.29px;font-size:12.3px;line-height:12.3px;color:#8c8c8c;letter-spacing:0.336px;left:374.1px;">Min</span>
<span class="t" style="top:546.29px;font-size:12.3px;line-height:12.3px;color:#8c8c8c;letter-spacing:0.283px;left:492.3px;">Max</span>
<div style="left:618.5px;top:585.8px;width:100.4px;height:1.1px;background:#dfdfe2;"></div>
<div style="left:736.5px;top:585.8px;width:100.4px;height:1.1px;background:#dfdfe2;"></div>
<span class="t" style="top:566.09px;font-size:11px;line-height:11px;color:#b5b5b5;left:725.9px;">-</span>
<span class="t" style="top:564.99px;font-size:12.3px;line-height:12.3px;color:#8c8c8c;letter-spacing:0.336px;left:625.1px;">Min</span>
<span class="t" style="top:564.99px;font-size:12.3px;line-height:12.3px;color:#8c8c8c;letter-spacing:0.283px;left:743.3px;">Max</span>
<div style="left:869.5px;top:585.8px;width:100.4px;height:1.1px;background:#dfdfe2;"></div>
<div style="left:987.5px;top:585.8px;width:100.4px;height:1.1px;background:#dfdfe2;"></div>
<span class="t" style="top:566.09px;font-size:11px;line-height:11px;color:#b5b5b5;left:976.9px;">-</span>
<span class="t" style="top:564.99px;font-size:12.3px;line-height:12.3px;color:#8c8c8c;letter-spacing:0.336px;left:876.1px;">Min</span>
<span class="t" style="top:564.99px;font-size:12.3px;line-height:12.3px;color:#8c8c8c;letter-spacing:0.283px;left:994.3px;">Max</span>
<div style="left:1120.4px;top:566.5px;width:100.4px;height:1.1px;background:#dfdfe2;"></div>
<div style="left:1238.4px;top:566.5px;width:100.4px;height:1.1px;background:#dfdfe2;"></div>
<span class="t" style="top:547.39px;font-size:11px;line-height:11px;color:#b5b5b5;left:1227.8px;">-</span>
<span class="t" style="top:546.29px;font-size:12.3px;line-height:12.3px;color:#8c8c8c;letter-spacing:0.336px;left:1127px;">Min</span>
<span class="t" style="top:546.29px;font-size:12.3px;line-height:12.3px;color:#8c8c8c;letter-spacing:0.283px;left:1245.2px;">Max</span>
<div style="left:1371.2px;top:566.5px;width:100.4px;height:1.1px;background:#dfdfe2;"></div>
<div style="left:1489.2px;top:566.5px;width:100.4px;height:1.1px;background:#dfdfe2;"></div>
<span class="t" style="top:547.39px;font-size:11px;line-height:11px;color:#b5b5b5;left:1478.6px;">-</span>
<span class="t" style="top:546.29px;font-size:12.3px;line-height:12.3px;color:#8c8c8c;letter-spacing:0.336px;left:1377.8px;">Min</span>
<span class="t" style="top:546.29px;font-size:12.3px;line-height:12.3px;color:#8c8c8c;letter-spacing:0.283px;left:1496px;">Max</span>
<span class="t" style="top:614.63px;font-size:12.6px;line-height:12.6px;color:#626262;font-weight:700;letter-spacing:-0.092px;left:116.6px;">Ranking Competitors</span>
<svg style="left:245.5px;top:613.5px" width="13" height="13" viewBox="0 0 13 13"><circle cx="6.5" cy="6.5" r="4.9" fill="none" stroke="#626262" stroke-width="1.25"/><text x="6.5" y="9.4" font-size="8.4" font-weight="700" text-anchor="middle" fill="#626262" font-family="Liberation Sans, sans-serif">?</text></svg>
<span class="t" style="top:614.63px;font-size:12.6px;line-height:12.6px;color:#626262;font-weight:700;letter-spacing:-0.042px;left:367.5px;">Competitor Performance</span>
<svg style="left:517.2px;top:613.5px" width="13" height="13" viewBox="0 0 13 13"><circle cx="6.5" cy="6.5" r="4.9" fill="none" stroke="#626262" stroke-width="1.25"/><text x="6.5" y="9.4" font-size="8.4" font-weight="700" text-anchor="middle" fill="#626262" font-family="Liberation Sans, sans-serif">?</text></svg>
<span class="t" style="top:614.63px;font-size:12.6px;line-height:12.6px;color:#626262;font-weight:700;letter-spacing:-0.138px;left:618.5px;">Competing Products</span>
<svg style="left:743.8px;top:613.5px" width="13" height="13" viewBox="0 0 13 13"><circle cx="6.5" cy="6.5" r="4.9" fill="none" stroke="#626262" stroke-width="1.25"/><text x="6.5" y="9.4" font-size="8.4" font-weight="700" text-anchor="middle" fill="#626262" font-family="Liberation Sans, sans-serif">?</text></svg>
<span class="t" style="top:614.63px;font-size:12.6px;line-height:12.6px;color:#626262;font-weight:700;letter-spacing:-0.062px;left:869.5px;">Show phrases that contain:</span>
<svg style="left:1034.5px;top:613.5px" width="13" height="13" viewBox="0 0 13 13"><circle cx="6.5" cy="6.5" r="4.9" fill="none" stroke="#626262" stroke-width="1.25"/><text x="6.5" y="9.4" font-size="8.4" font-weight="700" text-anchor="middle" fill="#626262" font-family="Liberation Sans, sans-serif">?</text></svg>
<span class="t" style="top:614.63px;font-size:12.6px;line-height:12.6px;color:#626262;font-weight:700;letter-spacing:-0.170px;left:1120.4px;">Exclude phrases that contain:</span>
<svg style="left:1297.5px;top:613.5px" width="13" height="13" viewBox="0 0 13 13"><circle cx="6.5" cy="6.5" r="4.9" fill="none" stroke="#626262" stroke-width="1.25"/><text x="6.5" y="9.4" font-size="8.4" font-weight="700" text-anchor="middle" fill="#626262" font-family="Liberation Sans, sans-serif">?</text></svg>
<span class="t" style="top:614.63px;font-size:12.6px;line-height:12.6px;color:#626262;font-weight:700;letter-spacing:-0.073px;left:1371.2px;">Advanced Rank Filter</span>
<svg style="left:1501.5px;top:613.5px" width="13" height="13" viewBox="0 0 13 13"><circle cx="6.5" cy="6.5" r="4.9" fill="none" stroke="#626262" stroke-width="1.25"/><text x="6.5" y="9.4" font-size="8.4" font-weight="700" text-anchor="middle" fill="#626262" font-family="Liberation Sans, sans-serif">?</text></svg>
<div style="left:116.6px;top:665.4px;width:100.4px;height:1.1px;background:#dfdfe2;"></div>
<div style="left:234.6px;top:665.4px;width:100.4px;height:1.1px;background:#dfdfe2;"></div>
<span class="t" style="top:645.39px;font-size:11px;line-height:11px;color:#b5b5b5;left:224px;">-</span>
<span class="t" style="top:644.29px;font-size:12.3px;line-height:12.3px;color:#8c8c8c;letter-spacing:0.336px;left:123.2px;">Min</span>
<span class="t" style="top:644.29px;font-size:12.3px;line-height:12.3px;color:#8c8c8c;letter-spacing:0.283px;left:241.4px;">Max</span>
<div style="left:367.5px;top:665.4px;width:100.4px;height:1.1px;background:#dfdfe2;"></div>
<div style="left:485.5px;top:665.4px;width:100.4px;height:1.1px;background:#dfdfe2;"></div>
<span class="t" style="top:645.39px;font-size:11px;line-height:11px;color:#b5b5b5;left:474.9px;">-</span>
<span class="t" style="top:644.29px;font-size:12.3px;line-height:12.3px;color:#8c8c8c;letter-spacing:0.336px;left:374.1px;">Min</span>
<span class="t" style="top:644.29px;font-size:12.3px;line-height:12.3px;color:#8c8c8c;letter-spacing:0.283px;left:492.3px;">Max</span>
<div style="left:618.5px;top:665.4px;width:100.4px;height:1.1px;background:#dfdfe2;"></div>
<div style="left:736.5px;top:665.4px;width:100.4px;height:1.1px;background:#dfdfe2;"></div>
<span class="t" style="top:645.39px;font-size:11px;line-height:11px;color:#b5b5b5;left:725.9px;">-</span>
<span class="t" style="top:644.29px;font-size:12.3px;line-height:12.3px;color:#8c8c8c;letter-spacing:0.336px;left:625.1px;">Min</span>
<span class="t" style="top:644.29px;font-size:12.3px;line-height:12.3px;color:#8c8c8c;letter-spacing:0.283px;left:743.3px;">Max</span>
<div style="left:869.5px;top:654px;width:222.8px;height:13.2px;border-bottom:1.1px solid #dcdcdc;border-radius:0 0 9px 9px;"></div>
<div style="left:998.8px;top:636px;width:20.4px;height:20.6px;background:#2f7d5a;border-radius:1px;"></div>
<svg style="left:1002.6px;top:641px" width="13" height="11" viewBox="0 0 13 11"><path d="M1.6 5.6L5 9L11.4 2" fill="none" stroke="#fff" stroke-width="2"/></svg>
<span class="t" style="top:640.69px;font-size:11px;line-height:11px;color:#7a7a7a;letter-spacing:0.383px;left:1023px;">All</span>
<div style="left:1040px;top:636px;width:20px;height:20.6px;background:#fff;border:1px solid #d6d6d6;border-radius:1px;"></div>
<span class="t" style="top:640.69px;font-size:11px;line-height:11px;color:#7a7a7a;letter-spacing:0.316px;left:1063.8px;">Any</span>
<div style="left:1120.3px;top:665.4px;width:223.7px;height:1.1px;background:#dfdfe2;"></div>
<div style="left:1371.2px;top:665.4px;width:48.8px;height:1.1px;background:#dfdfe2;"></div>
<div style="left:1423.4px;top:665.4px;width:48.9px;height:1.1px;background:#dfdfe2;"></div>
<div style="left:1489px;top:665.4px;width:49px;height:1.1px;background:#dfdfe2;"></div>
<div style="left:1541.5px;top:665.4px;width:49.5px;height:1.1px;background:#dfdfe2;"></div>
<span class="t" style="top:645.49px;font-size:11px;line-height:11px;color:#b5b5b5;left:1478.6px;">-</span>
<span class="t" style="top:644.29px;font-size:12.3px;line-height:12.3px;color:#8c8c8c;letter-spacing:0.759px;left:1377.8px;">A Mi</span>
<span class="t" style="top:644.29px;font-size:12.3px;line-height:12.3px;color:#8c8c8c;letter-spacing:0.490px;left:1430px;clip-path:inset(0 3.5px 0 0);">A Ma</span>
<span class="t" style="top:644.29px;font-size:12.3px;line-height:12.3px;color:#8c8c8c;letter-spacing:0.306px;left:1496px;">R Mi</span>
<span class="t" style="top:644.29px;font-size:12.3px;line-height:12.3px;color:#8c8c8c;letter-spacing:0.036px;left:1548.3px;clip-path:inset(0 3.5px 0 0);">R Ma</span>
<div style="left:1439.2px;top:724px;width:105.4px;height:30.5px;background:#fff;border:1px solid #dcdcdc;border-radius:3px;"></div>
<svg style="left:1451px;top:734.5px" width="10" height="10" viewBox="0 0 10 10"><path d="M1.5 1.5L8.5 8.5M8.5 1.5L1.5 8.5" stroke="#4a4a4a" stroke-width="2.7"/></svg>
<span class="t" style="top:733.00px;font-size:13px;line-height:13px;color:#5a5a5a;letter-spacing:-0.190px;left:1464.7px;">Clear Filters</span>
<div style="left:1555.6px;top:724px;width:57.8px;height:30.5px;background:#74b748;border:1px solid #6aad3f;border-radius:3px;"></div>
<span class="t" style="top:732.83px;font-size:13.2px;line-height:13.2px;color:#fff;letter-spacing:0.150px;left:1567.7px;">Apply</span>
<span class="t" style="top:859.47px;font-size:12.2px;line-height:12.2px;color:#3f7f37;font-weight:700;letter-spacing:-0.292px;left:111.5px;">Filtered keywords: 30</span>
<span class="t" style="top:851.70px;font-size:12.4px;line-height:12.4px;color:#555;font-weight:700;letter-spacing:-0.430px;left:1317px;">Sort by:</span>
<div style="left:1364.5px;top:841px;width:235px;height:32.6px;background:#fff;border:1px solid #e0e0e0;border-radius:4px;"></div>
<span class="t" style="top:850.80px;font-size:13px;line-height:13px;color:#555;letter-spacing:-0.067px;left:1372px;">Default</span>
<svg style="left:1587px;top:854.5px" width="7" height="6" viewBox="0 0 7 6"><path d="M0 0h7L3.5 5.6z" fill="#222"/></svg>
<div style="left:111.5px;top:882.4px;width:1487.9px;height:60px;border:1px solid #e5e5e8;background:#fff;"></div>
<div style="left:141.2px;top:882.4px;width:1px;height:60px;background:#e6e6e6;"></div>
<div style="left:166.5px;top:882.4px;width:1px;height:60px;background:#e6e6e6;"></div>
<div style="left:417.1px;top:882.4px;width:1px;height:60px;background:#e6e6e6;"></div>
<div style="left:476.8px;top:882.4px;width:1px;height:60px;background:#e6e6e6;"></div>
<div style="left:579.1px;top:882.4px;width:1px;height:60px;background:#e6e6e6;"></div>
<div style="left:654.1px;top:882.4px;width:1px;height:60px;background:#e6e6e6;"></div>
<div style="left:730.5px;top:882.4px;width:1px;height:60px;background:#e6e6e6;"></div>
<div style="left:805.5px;top:882.4px;width:1px;height:60px;background:#e6e6e6;"></div>
<div style="left:882.5px;top:882.4px;width:1px;height:60px;background:#e6e6e6;"></div>
<div style="left:957.5px;top:882.4px;width:1px;height:60px;background:#e6e6e6;"></div>
<div style="left:1033.1px;top:882.4px;width:1px;height:60px;background:#e6e6e6;"></div>
<div style="left:1131.5px;top:882.4px;width:1px;height:60px;background:#e6e6e6;"></div>
<div style="left:1229.9px;top:882.4px;width:1px;height:60px;background:#e6e6e6;"></div>
<div style="left:1290px;top:882.4px;width:1px;height:60px;background:#e6e6e6;"></div>
<div style="left:1350.2px;top:882.4px;width:1px;height:60px;background:#e6e6e6;"></div>
<div style="left:1428px;top:882.4px;width:1px;height:60px;background:#e6e6e6;"></div>
<div style="left:1511.5px;top:882.4px;width:1px;height:60px;background:#e6e6e6;"></div>
<span class="t" style="top:928.39px;font-size:12.3px;line-height:12.3px;color:#4a4a4a;font-weight:700;left:118.5px;">#</span>
<span class="t" style="top:928.39px;font-size:12.3px;line-height:12.3px;color:#4a5f86;font-weight:700;letter-spacing:-0.206px;left:174px;">Phrase</span>
<span class="t" style="top:893.99px;font-size:12.3px;line-height:12.3px;color:#4a4a4a;font-weight:700;letter-spacing:-0.526px;right:1194.53px;">Cerebro</span>
<span class="t" style="top:911.19px;font-size:12.3px;line-height:12.3px;color:#4a4a4a;font-weight:700;letter-spacing:-0.484px;right:1194.48px;">IQ</span>
<span class="t" style="top:928.39px;font-size:12.3px;line-height:12.3px;color:#4a4a4a;font-weight:700;letter-spacing:-0.297px;right:1194.30px;">Score</span>
<span class="t" style="top:928.39px;font-size:12.3px;line-height:12.3px;color:#4a4a4a;font-weight:700;letter-spacing:-0.411px;right:1092.41px;">Search Volume</span>
<span class="t" style="top:911.19px;font-size:12.3px;line-height:12.3px;color:#4a4a4a;font-weight:700;letter-spacing:-0.592px;right:1017.29px;">Sponsored</span>
<span class="t" style="top:928.39px;font-size:12.3px;line-height:12.3px;color:#4a4a4a;font-weight:700;letter-spacing:-0.305px;right:1017.00px;">ASINs</span>
<span class="t" style="top:911.19px;font-size:12.3px;line-height:12.3px;color:#4a4a4a;font-weight:700;letter-spacing:-0.465px;right:940.76px;">Competing</span>
<span class="t" style="top:928.39px;font-size:12.3px;line-height:12.3px;color:#4a4a4a;font-weight:700;letter-spacing:-0.328px;right:940.63px;">Products</span>
<span class="t" style="top:893.99px;font-size:12.3px;line-height:12.3px;color:#4a4a4a;font-weight:700;letter-spacing:-0.166px;right:865.17px;">CPR 8-</span>
<span class="t" style="top:911.19px;font-size:12.3px;line-height:12.3px;color:#4a4a4a;font-weight:700;letter-spacing:-0.281px;right:865.28px;">Day</span>
<span class="t" style="top:928.39px;font-size:12.3px;line-height:12.3px;color:#4a4a4a;font-weight:700;letter-spacing:-0.449px;right:865.45px;">Giveaways</span>
<span class="t" style="top:911.19px;font-size:12.3px;line-height:12.3px;color:#4a4a4a;font-weight:700;letter-spacing:-0.258px;right:788.46px;">Match</span>
<span class="t" style="top:928.39px;font-size:12.3px;line-height:12.3px;color:#4a4a4a;font-weight:700;letter-spacing:0.068px;right:788.13px;">Type</span>
<span class="t" style="top:893.99px;font-size:12.3px;line-height:12.3px;color:#4a4a4a;font-weight:700;letter-spacing:-0.592px;right:713.29px;">Sponsored</span>
<span class="t" style="top:911.19px;font-size:12.3px;line-height:12.3px;color:#4a4a4a;font-weight:700;letter-spacing:-0.526px;right:713.23px;">Rank</span>
<span class="t" style="top:928.39px;font-size:12.3px;line-height:12.3px;color:#4a4a4a;font-weight:700;letter-spacing:-0.098px;right:712.80px;">(avg)</span>
<span class="t" style="top:893.99px;font-size:12.3px;line-height:12.3px;color:#4a4a4a;font-weight:700;letter-spacing:-0.592px;right:638.29px;">Sponsored</span>
<span class="t" style="top:911.19px;font-size:12.3px;line-height:12.3px;color:#4a4a4a;font-weight:700;letter-spacing:-0.526px;right:638.23px;">Rank</span>
<span class="t" style="top:928.39px;font-size:12.3px;line-height:12.3px;color:#4a4a4a;font-weight:700;letter-spacing:0.055px;right:637.65px;">(count)</span>
<span class="t" style="top:893.99px;font-size:12.3px;line-height:12.3px;color:#4a4a4a;font-weight:700;letter-spacing:-0.366px;right:539.37px;">Amazon</span>
<span class="t" style="top:911.19px;font-size:12.3px;line-height:12.3px;color:#4a4a4a;font-weight:700;letter-spacing:-0.566px;right:539.57px;">Recommended</span>
<span class="t" style="top:928.39px;font-size:12.3px;line-height:12.3px;color:#4a4a4a;font-weight:700;letter-spacing:-0.208px;right:539.21px;">Rank (avg)</span>
<span class="t" style="top:893.99px;font-size:12.3px;line-height:12.3px;color:#4a4a4a;font-weight:700;letter-spacing:-0.366px;right:441.37px;">Amazon</span>
<span class="t" style="top:911.19px;font-size:12.3px;line-height:12.3px;color:#4a4a4a;font-weight:700;letter-spacing:-0.566px;right:441.57px;">Recommended</span>
<span class="t" style="top:928.39px;font-size:12.3px;line-height:12.3px;color:#4a4a4a;font-weight:700;letter-spacing:-0.105px;right:441.11px;">Rank (count)</span>
<span class="t" style="top:911.19px;font-size:12.3px;line-height:12.3px;color:#4a4a4a;font-weight:700;letter-spacing:-0.574px;right:380.87px;">Position</span>
<span class="t" style="top:928.39px;font-size:12.3px;line-height:12.3px;color:#4a4a4a;font-weight:700;letter-spacing:-0.053px;right:380.35px;">(Rank)</span>
<span class="t" style="top:911.19px;font-size:12.3px;line-height:12.3px;color:#4a4a4a;font-weight:700;letter-spacing:-0.310px;right:320.31px;">Relative</span>
<span class="t" style="top:928.39px;font-size:12.3px;line-height:12.3px;color:#4a4a4a;font-weight:700;letter-spacing:-0.526px;right:320.53px;">Rank</span>
<span class="t" style="top:911.19px;font-size:12.3px;line-height:12.3px;color:#4a4a4a;font-weight:700;letter-spacing:-0.344px;right:242.74px;">Competitor</span>
<span class="t" style="top:928.39px;font-size:12.3px;line-height:12.3px;color:#4a4a4a;font-weight:700;letter-spacing:-0.208px;right:242.61px;">Rank (avg)</span>
<span class="t" style="top:893.99px;font-size:12.3px;line-height:12.3px;color:#4a4a4a;font-weight:700;letter-spacing:-0.586px;right:159.19px;">Ranking</span>
<span class="t" style="top:911.19px;font-size:12.3px;line-height:12.3px;color:#4a4a4a;font-weight:700;letter-spacing:-0.442px;right:159.04px;">Competitors</span>
<span class="t" style="top:928.39px;font-size:12.3px;line-height:12.3px;color:#4a4a4a;font-weight:700;letter-spacing:0.055px;right:158.55px;">(count)</span>
<span class="t" style="top:893.99px;font-size:12.3px;line-height:12.3px;color:#4a4a4a;font-weight:700;letter-spacing:-0.344px;right:71.84px;">Competitor</span>
<span class="t" style="top:911.19px;font-size:12.3px;line-height:12.3px;color:#4a4a4a;font-weight:700;letter-spacing:-0.369px;right:71.87px;">Performance</span>
<span class="t" style="top:928.39px;font-size:12.3px;line-height:12.3px;color:#4a4a4a;font-weight:700;letter-spacing:-0.297px;right:71.80px;">Score</span>
<div style="left:1656px;top:93px;width:5.5px;height:385px;background:#8e8e93;border-radius:3px;"></div>
<div style="left:0px;top:28px;width:54.5px;height:904px;background:#141f2c;"></div>
<div style="left:0px;top:192px;width:54.5px;height:46px;background:linear-gradient(90deg,#172a45 0%,#1a3558 12%,#224d88 36%,#2a62ac 66%,#2f7ad9 100%);"></div>
<svg style="left:5px;top:35px" width="45" height="45" viewBox="0 0 45 45"><circle cx="21.3" cy="23.2" r="14.4" fill="#3b82ff"/><path d="M24.500 11.600L37 12.500 31 17.500z" fill="#2a66dc"/><path d="M25.200 12.100l4.400 1.800-2.400.600z" fill="#12309a"/><path d="M18.400 32.800Q22.800 21.800 37.200 13.400" fill="none" stroke="#1d50c6" stroke-width="4.200"/><path d="M8.200 31.200L12.600 27l5.800 5.800Q22.800 21.800 37.400 13.200L35 22A14.500 14.500 0 0 1 9.300 31.800z" fill="#fff"/><path d="M8 31.100L12.600 26.600l5.900 5.900Q20.500 27 23.500 23.500" fill="none" stroke="#0a1430" stroke-width="1.100"/><path d="M23.400 24.800l8.600-5.700 2.600 2.600" fill="none" stroke="#15181f" stroke-width=".800"/></svg>
<svg style="left:15px;top:110.6px" width="24" height="24" viewBox="0 0 24 24"><path d="M12.200 2.600L21.600 6v12.400L12.400 21.400 2.700 18.400V6z" fill="#d9dade"/><path d="M12.200 2.600L21.600 6 12.400 8.300 2.700 6z" fill="#e6e7ea"/><path d="M12.400 8.300v13.100M2.700 6l9.700 2.300L21.600 6" fill="none" stroke="#8b8f98" stroke-width=".700"/><circle cx="16.300" cy="12.200" r="1.900" fill="none" stroke="#222b38" stroke-width="1.100"/><path d="M17.700 13.700l1.900 1.900" stroke="#222b38" stroke-width="1.200"/></svg>
<svg style="left:15px;top:157px" width="24" height="24" viewBox="0 0 24 24"><path d="M2.500 16.200h3.100v3.500H2.500zM6.800 14.500h2.800v5.200H6.800zM11 11.500h2.500v8.200H11zM14.500 8.100h2.600v11.600h-2.600zM18.200 4.600H21v15.100h-2.800z" fill="#e6e6e6"/><path d="M2.400 14.700Q10 10.400 14.800 3.700h2.800Q12 11.300 2.900 15.800z" fill="#e6e6e6"/></svg>
<svg style="left:16px;top:203.7px" width="22" height="22" viewBox="0 0 24 24"><mask id="bm"><g fill="#fff"><circle cx="20.30" cy="12.50" r="2.300"/><circle cx="19.21" cy="16.55" r="2.300"/><circle cx="16.25" cy="19.51" r="2.300"/><circle cx="12.20" cy="20.60" r="2.300"/><circle cx="8.15" cy="19.51" r="2.300"/><circle cx="5.19" cy="16.55" r="2.300"/><circle cx="4.10" cy="12.50" r="2.300"/><circle cx="5.19" cy="8.45" r="2.300"/><circle cx="8.15" cy="5.49" r="2.300"/><circle cx="12.20" cy="4.40" r="2.300"/><circle cx="16.25" cy="5.49" r="2.300"/><circle cx="19.21" cy="8.45" r="2.300"/><circle cx="12.200" cy="12.500" r="8.200"/></g><g fill="#000"><circle cx="12.200" cy="12.500" r="6.500"/><circle cx="18.80" cy="12.50" r="1.500"/><circle cx="17.92" cy="15.80" r="1.500"/><circle cx="15.50" cy="18.22" r="1.500"/><circle cx="12.20" cy="19.10" r="1.500"/><circle cx="8.90" cy="18.22" r="1.500"/><circle cx="6.48" cy="15.80" r="1.500"/><circle cx="5.60" cy="12.50" r="1.500"/><circle cx="6.48" cy="9.20" r="1.500"/><circle cx="8.90" cy="6.78" r="1.500"/><circle cx="12.20" cy="5.90" r="1.500"/><circle cx="15.50" cy="6.78" r="1.500"/><circle cx="17.92" cy="9.20" r="1.500"/></g></mask><rect width="24" height="24" fill="#edf3ff" mask="url(#bm)"/><g fill="none" stroke="#edf3ff" stroke-width="1.400"><path d="M12.400 4.800V20.200" stroke-width="1.300"/><path d="M5 12.700H12M8.700 7.600L9.600 12.600 7.400 17.400" stroke-width="1.700"/><path d="M12.600 8q2.600-1.600 4.600 .800M12.600 11.400h2.800l2 1.800M18.200 13q.800 2.600-1.400 4.600M12.600 15.400h2.400l.600 2.400"/></g></svg>
<svg style="left:15px;top:249.4px" width="24" height="24" viewBox="0 0 24 24"><path d="M2.700 4.800H5v12.100h16.600v2.300H2.700z" fill="#e6e6e6"/><path d="M7 15.100v-3.400l3-5.600 3.500 3.400 3.400-1.200 3.400 5.900v.9z" fill="#e6e6e6"/></svg>
<svg style="left:15px;top:297.5px" width="24" height="24" viewBox="0 0 24 24"><path d="M1.600 6.500q0-1.300 1.300-1.300h7.300v3.400h-5v6.700h5v3.400H2.900q-1.300 0-1.300-1.300z" fill="#e6e6e6"/><path d="M21.200 6.500q0-1.300-1.300-1.300h-7.500v3.400h5.200v6.700h-5.200v3.400h7.500q1.300 0 1.300-1.300z" fill="#e6e6e6"/><circle cx="21.600" cy="4.500" r="3.100" fill="#141f2c" stroke="#e6e6e6" stroke-width="1"/><path d="M20.600 3.800q0-1 1-1t1 1q0 .700-1 1.200v.600" fill="none" stroke="#e6e6e6" stroke-width=".700"/></svg>
<svg style="left:15px;top:341.9px" width="24" height="24" viewBox="0 0 24 24"><circle cx="12.200" cy="12" r="10.200" fill="none" stroke="#e6e6e6" stroke-width="1.100"/><circle cx="12.200" cy="12" r="8.700" fill="none" stroke="#e6e6e6" stroke-width=".900"/><rect x="6" y="5.800" width="12.400" height="12.400" rx="1.500" fill="none" stroke="#e6e6e6" stroke-width="1.200"/><circle cx="12.200" cy="12" r="2.600" fill="none" stroke="#e6e6e6" stroke-width="1.300"/><path d="M12.200 5.800v3.600M12.200 14.600v3.600M6 12h3.600M14.800 12h3.600" stroke="#e6e6e6" stroke-width="1.200"/></svg>
<svg style="left:15px;top:388.2px" width="24" height="24" viewBox="0 0 24 24"><circle cx="12.200" cy="12" r="8.600" fill="none" stroke="#e6e6e6" stroke-width="1.900"/><path d="M6.800 10.200l4.600 5.900 8.200-10" fill="none" stroke="#e6e6e6" stroke-width="3.200"/></svg>
<svg style="left:15px;top:434px" width="24" height="24" viewBox="0 0 24 24"><path d="M6 4.100h7.800l4 4v12H6z" fill="none" stroke="#e6e6e6" stroke-width="2" stroke-linejoin="round"/><path d="M13.300 4.100v4.500h4.500" fill="none" stroke="#e6e6e6" stroke-width="1.200"/><path d="M8.500 11.700h7.100M8.500 14.600h7.100M8.500 17.300h7.100" stroke="#e6e6e6" stroke-width="1.900"/></svg>
<svg style="left:15px;top:480.7px" width="24" height="24" viewBox="0 0 24 24"><rect x="3.400" y="4.900" width="14.200" height="13.700" rx="2" fill="none" stroke="#e6e6e6" stroke-width="1.500"/><path d="M6.400 10.800l4.900 4.400 8.400-9.300" fill="none" stroke="#e6e6e6" stroke-width="3.300"/></svg>
<svg style="left:15px;top:526.8px" width="24" height="24" viewBox="0 0 24 24"><path d="M5.600 4.600q6.600-1.400 13.600 0l.7 4.500H4.900z" fill="#e6e6e6"/><path d="M4.900 7.400h15v1.700h-15z" fill="#b9bcc4"/><rect x="2.600" y="10" width="19.100" height="2.900" rx="1.400" fill="#e6e6e6"/><path d="M7.500 11h3.800v1.200H7.500zM13.200 11H17v1.200h-3.800z" fill="#2a3442"/><path d="M6.200 12.600c0 4 2.400 6 6.100 6s6.100-2 6.100-6" fill="none" stroke="#e6e6e6" stroke-width="1.800"/></svg>
<svg style="left:15px;top:573px" width="24" height="24" viewBox="0 0 24 24"><path d="M6 11.300l1.400-4.300q3-1.900 5.200-.500 2-1.500 4 .200l1 4.600z" fill="#e6e6e6"/><path d="M2.400 12q9.500-2.300 18.500 0l-.3 1.200q-9-1.600-17.900 0z" fill="#e6e6e6"/><path d="M4.500 14.700h15.400l-.900 5.200h-5.100l-1.100-2h-1.200l-1.100 2H5.400z" fill="#e6e6e6"/><path d="M7 16.600l3 .400-1.400 1.100zM17.400 16.600l-3 .400 1.400 1.100z" fill="#2a3442"/><circle cx="18.200" cy="7" r="3.200" fill="#141f2c" stroke="#e6e6e6" stroke-width=".900"/><path d="M18.200 5.100v2.400M18.200 8.300v.800" stroke="#e6e6e6" stroke-width="1"/></svg>
<svg style="left:15px;top:618.7px" width="24" height="24" viewBox="0 0 24 24"><circle cx="12.200" cy="12" r="9.300" fill="#dcdde1"/><text x="12.400" y="16.200" font-size="11.500" font-weight="700" text-anchor="middle" fill="#1a2330" font-family="Liberation Sans, sans-serif">P</text></svg>
<svg style="left:15px;top:664.4px" width="24" height="24" viewBox="0 0 24 24"><path d="M.6 8.400c3.400.400 5.600 1.300 7.600 2.300 2-.900 4.300-1.500 6.300-1.500 2.200 0 3.800.400 5 1.300v3c-1.200 2.300-3.400 3.600-6 3.600-5.400 0-7.300-4.300-12.900-8.700z" fill="#e6e6e6"/><path d="M10.500 9.100q3.400-4.300 6.800 0z" fill="#e6e6e6"/><circle cx="13.900" cy="5.800" r="1.200" fill="#e6e6e6"/><circle cx="21.200" cy="11.200" r="2.300" fill="none" stroke="#e6e6e6" stroke-width="1.200"/><path d="M12.300 17h3l2 2.600h-7.300z" fill="#e6e6e6"/></svg>
<div style="left:4.5px;top:725.6px;width:44.5px;height:1.4px;background:#1c3c66;"></div>
<svg style="left:15px;top:738.5px" width="24" height="24" viewBox="0 0 24 24"><circle cx="12.200" cy="12" r="8.600" fill="none" stroke="#4a90e8" stroke-width="1.500"/><path d="M8.300 7.700L16.900 12l-8.600 4.200z" fill="#3f8df0"/></svg>
<svg style="left:15px;top:784px" width="24" height="24" viewBox="0 0 24 24"><path d="M6.200 3.400h7.300v2.500h-.900L18.600 15.400H4.900L7.900 5.900H6.200z" fill="#cfcfd2"/><path d="M10.900 15.400h1.900v5.100l-.95 1-.95-1z" fill="#cfcfd2"/></svg>
<div style="left:25.75px;top:778.6px;width:14px;height:14px;background:#3f8df0;border-radius:50%;box-shadow:0 0 0 1px #142a4a;"></div>
<span class="t" style="top:781.70px;font-size:9.8px;line-height:9.8px;color:#fff;font-weight:700;left:32.8px;transform:translateX(-50%);">2</span>
<div style="left:0px;top:0px;width:1663px;height:27.6px;background:#fff;border-bottom:1px solid #dadce0;"></div>
<div style="left:0px;top:0px;width:1663px;height:1.2px;background:#9a9a9a;"></div>
<div style="left:80px;top:4px;width:1422px;height:20.6px;background:#f1f3f4;border-radius:10.3px;"></div>
<svg style="left:9px;top:8px" width="13" height="13" viewBox="0 0 13 13"><path d="M12 6.500H2M6.400 1.800L1.700 6.500l4.700 4.700" fill="none" stroke="#5f6368" stroke-width="1.500"/></svg>
<svg style="left:32.500px;top:8px" width="13" height="13" viewBox="0 0 13 13"><path d="M1 6.500h10M6.600 1.800l4.700 4.700-4.700 4.700" fill="none" stroke="#bdc1c6" stroke-width="1.500"/></svg>
<svg style="left:56px;top:7.500px" width="14" height="14" viewBox="0 0 14 14"><path d="M11.300 4.200A5 5 0 1 0 12 8.300" fill="none" stroke="#5f6368" stroke-width="1.600"/><path d="M12.300 1.300v4h-4z" fill="#5f6368"/></svg>
<svg style="left:88px;top:9px" width="9" height="11" viewBox="0 0 9 11"><rect x=".8" y="4.600" width="7.400" height="5.800" rx="1" fill="#5f6368"/><path d="M2.500 4.800V3.200a2 2 0 0 1 4 0v1.600" fill="none" stroke="#5f6368" stroke-width="1.300"/></svg>
<span class="t" style="top:8.63px;font-size:11.3px;line-height:11.3px;color:#6b6f74;letter-spacing:-0.450px;left:104px;"><span style="color:#202124">members.helium10.com</span>/cerebro/view-multi-search?asin=B0736LDC21&amp;id=9673096&amp;searchType=organic&amp;impressionExact30From=1000&amp;impressionExact30To=&amp;iqFrom=&amp;iqTo=&amp;rankFrom=&amp;rankTo=&amp;countFrom=2&amp;countTo=&amp;sponsoredAvgFrom=&amp;sponsoredAvgTo=&amp;sponsoredCountF...</span>
<svg style="left:1458px;top:7.500px" width="14" height="14" viewBox="0 0 14 14"><circle cx="5.800" cy="5.800" r="4.200" fill="none" stroke="#5f6368" stroke-width="1.400"/><path d="M9 9l3.800 3.800" stroke="#5f6368" stroke-width="1.700"/><path d="M3.800 5.800h4M5.800 3.800v4" stroke="#5f6368" stroke-width="1.100"/></svg>
<svg style="left:1481.500px;top:7px" width="14" height="14" viewBox="0 0 14 14"><path d="M7 1.400l1.750 3.700 4 .500-2.950 2.750.750 4L7 10.400l-3.550 1.950.750-4L1.250 5.600l4-.500z" fill="none" stroke="#5f6368" stroke-width="1.300" stroke-linejoin="round"/></svg>
<svg style="left:1511.500px;top:7.500px" width="13" height="13" viewBox="0 0 13 13"><g fill="#8a8d91"><path d="M6.500 0.800l1.300 2.200H5.200z"/><path d="M11.500 3.400l-.700 2.500-1.700-1.800z"/><path d="M11.200 9.600l-2.500-.500 1.600-1.900z"/><path d="M6.500 12.200L5.200 10h2.600z"/><path d="M1.500 9.600l.800-2.500 1.700 1.900z"/><path d="M1.700 3.400l2.500.500-1.700 1.900z"/></g></svg>
<div style="left:1535.5px;top:8px;width:12.5px;height:11.5px;background:#d93a2b;border-radius:1.500px;"></div>
<div style="left:1537.5px;top:12.5px;width:8.5px;height:1.6px;background:#f4b6ae;"></div>
<div style="left:1540.5px;top:15.8px;width:11.5px;height:8px;background:#3f4247;border-radius:1.500px;"></div>
<span class="t" style="top:17.17px;font-size:7px;line-height:7px;color:#fff;font-weight:700;left:1546.3px;transform:translateX(-50%);">10</span>
<svg style="left:1558.500px;top:7.500px" width="15" height="13" viewBox="0 0 15 13"><circle cx="6.500" cy="6.700" r="5.800" fill="#2f6fe8"/><path d="M2.500 7l2.300 2.300 3-3.800 1.300.8 4.800-4.300" fill="none" stroke="#111" stroke-width="1.600"/><path d="M1.800 10.500c3 .5 5.500-.5 8-3.500" fill="none" stroke="#fff" stroke-width="1.200"/></svg>
<svg style="left:1583.500px;top:9px" width="11" height="10" viewBox="0 0 11 10"><path d="M.8.800h4v3.400h-4zM6.200.800h4v3.400h-4zM.8 5.800h4v3.400h-4zM6.200 5.800h4v3.400h-4z" fill="none" stroke="#5f6368" stroke-width="1.300"/></svg>
<div style="left:1605.8px;top:8px;width:1px;height:12px;background:#dadce0;"></div>
<div style="left:1614.3px;top:6px;width:16.2px;height:16.2px;background:#1a53a0;border-radius:50%;"></div>
<span class="t" style="top:9.94px;font-size:10px;line-height:10px;color:#fff;left:1622.4px;transform:translateX(-50%);">B</span>
<div style="left:1644.7px;top:9.1px;width:2.4px;height:2.4px;background:#5f6368;border-radius:50%;"></div>
<div style="left:1644.7px;top:12.6px;width:2.4px;height:2.4px;background:#5f6368;border-radius:50%;"></div>
<div style="left:1644.7px;top:16.2px;width:2.4px;height:2.4px;background:#5f6368;border-radius:50%;"></div>
<div style="left:1661.5px;top:0px;width:1.5px;height:932px;background:#0b0b0d;"></div>
<svg style="left:1255px;top:565px" width="125" height="70" viewBox="0 0 125 70"><path d="M13 10.500L94 46" stroke="#e0222b" stroke-width="4.200" fill="none"/><path d="M113 53.600L81.600 55.800L92.400 30.600z" fill="#e0222b"/></svg>
<div style="left:1508px;top:645.8px;width:38px;height:38px;background:radial-gradient(circle,rgba(242,228,40,.95) 0%,rgba(242,228,40,.92) 70%,rgba(242,228,40,0) 100%);border-radius:50%;"></div>
<svg style="left:1520.600px;top:654.700px" width="12" height="20" viewBox="0 0 12 20"><path d="M1.200 1.300h3.300l1.500 1 1.500-1h3.300M6 2.300v15.400M1.200 18.700h3.300l1.500-1 1.500 1h3.300" fill="none" stroke="#111" stroke-width="2.300"/></svg>
</div></body></html>
